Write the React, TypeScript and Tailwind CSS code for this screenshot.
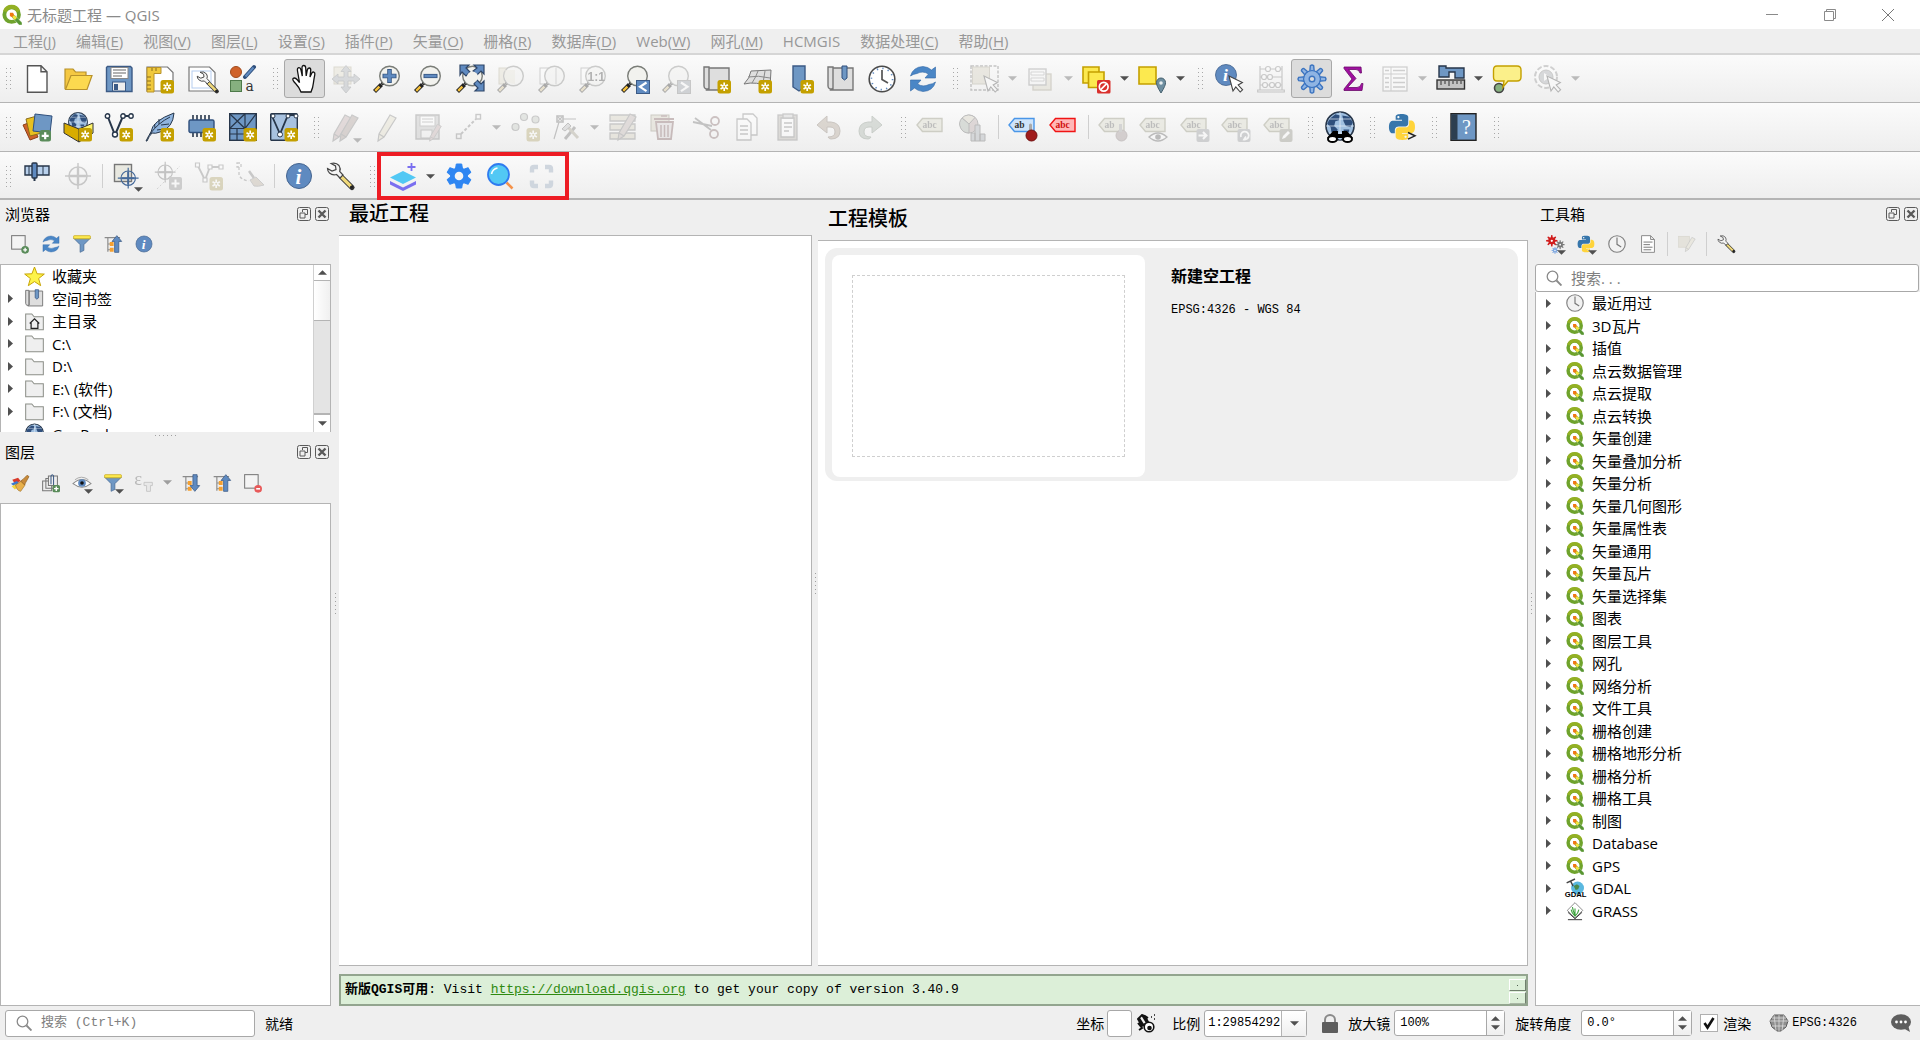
import React from 'react';

type Tool = {
  icon: string;
  label: string;
  off?: boolean;
  on?: boolean;
  menu?: boolean;
  mini?: boolean;
};

/* ---------- shared icon parts, all on a 28 x 28 grid ---------- */

const NewBadge = () => (
  <g>
    <rect x="14.5" y="15" width="13.5" height="13.5" rx="2.5" fill="#c4a000" />
    <path d="M21.2 17.5v8.5M17.5 19.7l7.4 4.2M24.9 19.7l-7.4 4.2" stroke="#fff" strokeWidth="1.7" />
    <circle cx="21.2" cy="21.8" r="1" fill="#c4a000" />
  </g>
);

const PlusBadge = () => (
  <g>
    <rect x="16.5" y="17" width="11.5" height="11.5" rx="2.5" fill="#5a8c5a" />
    <path d="M22.2 19.3v7M18.7 22.8h7" stroke="#fff" strokeWidth="2.2" />
  </g>
);

const Lens = ({ children }: { children?: React.ReactNode }) => (
  <g>
    <path d="M8.5 19.5l-7 7" stroke="#222" strokeWidth="4.2" />
    <path d="M6.4 21.6l-4.2 4.2" stroke="#f5c13c" strokeWidth="2.4" />
    <circle cx="10" cy="18" r="2" fill="#111" />
    <circle cx="16.5" cy="11" r="9.8" fill="#f2f2ee" stroke="#7a7d78" strokeWidth="1.4" />
    {children}
  </g>
);

const Cursor = () => (
  <path d="M13 11l4 15 2.8-4 4.4 5 2.4-2.2-4.4-4.8 4.2-2.4z" fill="#fff" stroke="#444" strokeWidth="1.1" />
);

const Tag = ({ fill, stroke, color, text = 'abc' }: { fill: string; stroke: string; color: string; text?: string }) => (
  <g>
    <path d="M0 12l5.500-6.500H25V18.500H5.500z" fill={fill} stroke={stroke} strokeWidth="1.4" />
    <text x="5.500" y="15" fontSize="9.500" fontFamily="Liberation Serif, serif" fontWeight="bold" fill={color}>{text}</text>
  </g>
);

const Globe = ({ cx, cy, r }: { cx: number; cy: number; r: number }) => (
  <g transform={`translate(${cx} ${cy}) scale(${r / 12})`}>
    <circle r="12" fill="#9fbfe0" stroke="#27364a" strokeWidth="1.4" />
    <path d="M-9-6l5-4 4 1-1 4-3 1-1 4 3 3-2 6-3-2-1-6-3-3zM2-9l6 1 3 5-2 4-4-1-2-4zM3 3l5 0-1 5-3 2z" fill="#2f4f7c" />
    <path d="M-12 0h24M-9.5-6h19M-9.5 6h19M0-12v24" stroke="#e6eef7" strokeWidth=".6" />
  </g>
);

const snake =
  'M14.25.18l.9.2.73.26.59.3.45.32.34.34.25.34.16.33.1.3.04.26.02.2-.01.13V8.5l-.05.63-.13.55-.21.46-.26.38-.3.31-.33.25-.35.19-.35.14-.33.1-.3.07-.26.04-.21.02H8.77l-.69.05-.59.14-.5.22-.41.27-.33.32-.27.35-.2.36-.15.37-.1.35-.07.32-.04.27-.02.21v3.06H3.17l-.21-.03-.28-.07-.32-.12-.35-.18-.36-.26-.36-.36-.35-.46-.32-.59-.28-.73-.21-.88-.14-1.05-.05-1.23.06-1.22.16-1.04.24-.87.32-.71.36-.57.4-.44.42-.33.42-.24.4-.16.36-.1.32-.05.24-.01h.16l.06.01h8.16v-.83H6.18l-.01-2.75-.02-.37.05-.34.11-.31.17-.28.25-.26.31-.23.38-.2.44-.18.51-.15.58-.12.64-.1.71-.06.77-.04.84-.02 1.27.05zm-6.3 1.98l-.23.33-.08.41.08.41.23.34.33.22.41.09.41-.09.33-.22.23-.34.08-.41-.08-.41-.23-.33-.33-.22-.41-.09-.41.09z';

const Python = () => (
  <g transform="translate(1 1) scale(1.08)">
    <path fill="#3776ab" d={snake} />
    <path fill="#ffd43b" transform="rotate(180 12 12)" d={snake} />
  </g>
);

const Cog = ({ cx, cy, r, fill, stroke = 'none', hole = '#fff' }: { cx: number; cy: number; r: number; fill: string; stroke?: string; hole?: string }) => (
  <g transform={`translate(${cx} ${cy}) scale(${r / 10})`} fill={fill} stroke={stroke}>
    {[0, 45, 90, 135, 180, 225, 270, 315].map((a) => (
      <path key={a} transform={`rotate(${a})`} d="M-1.6-5l.4-4.5q1.200-1 2.400 0L1.600-5z" />
    ))}
    <circle r="6" />
    <circle r="5.3" stroke="none" />
    <circle r="2" fill={hole} />
  </g>
);

const Crosshair = ({ color }: { color: string }) => (
  <g stroke={color} fill="none" strokeWidth="1.5">
    <circle cx="14" cy="14" r="9" />
    <path d="M14 1v26M1 14h26" />
    <path d="M14 6v16M6 14h16" strokeWidth="2.4" />
  </g>
);

const Info = ({ r = 12.5 }: { r?: number }) => (
  <g transform={`translate(14 14) scale(${r / 12.5})`}>
    <circle r="12.5" fill="#5f8ac0" stroke="#44648f" strokeWidth="1" />
    <text x="-3.5" y="7.5" fontSize="21" fontStyle="italic" fontWeight="bold" fontFamily="Liberation Serif, serif" fill="#fff">i</text>
  </g>
);

const Wrench = () => (
  <g>
    <path d="M15 14.500L26 25.500" stroke="#333" strokeWidth="5.2" strokeLinecap="round" />
    <path d="M15.500 15L25 24.500" stroke="#f0d97a" strokeWidth="3.2" />
    <circle cx="25.500" cy="25" r="1.500" fill="#222" />
    <path d="M5 1.500q5-1.500 8 2 2 3 .7 6l3.300 3.500-3 3-3.500-3.500q-4 1.200-7-1.500-2-2-2-4.500l4.500 2.500 4-1.500-.5-3.500z" fill="#f4f4f4" stroke="#444" strokeWidth="1.2" />
  </g>
);

const Refresh = () => (
  <g fill="#4a86c6" stroke="#2f66a6" strokeWidth=".6">
    <path d="M1.5 11Q4 2 14 1.500q5 .3 8.500 3.500L26.500 2v11H16l3.500-4Q14 5.500 8 8.500 4 9 1.500 11z" />
    <path d="M26.500 17Q24 26 14 26.500q-5-.3-8.500-3.500L1.500 26V15H12l-3.500 4q5.500 3.500 11.500.5 4-.5 6.500-2.500z" />
  </g>
);

const Clock = ({ ring = '#4a4a4a' }: { ring?: string }) => (
  <g>
    <circle cx="14" cy="14" r="12.8" fill="#fff" stroke={ring} strokeWidth="1.6" />
    <circle cx="14" cy="14" r="10.6" fill="none" stroke="#5f8ac0" strokeWidth="1.7" strokeDasharray="1.3 4.25" />
    <path d="M14 5v9.500l6 3.500" fill="none" stroke="#555" strokeWidth="1.7" />
  </g>
);

const PlainClock = () => (
  <g>
    <circle cx="14" cy="14" r="12.8" fill="#f2f2f2" stroke="#808080" strokeWidth="1.8" />
    <path d="M14 4v10.500l6.500 4" fill="none" stroke="#777" strokeWidth="1.8" />
  </g>
);

const Funnel = () => (
  <g>
    <path d="M1 5l10 10v12l6-3V15L27 5z" fill="#6e97c4" stroke="#44648f" />
    <rect x="1" y="1" width="26" height="5" rx="1" fill="#fce94f" stroke="#c4a000" />
  </g>
);

const TreeMove = ({ down }: { down?: boolean }) => (
  <g>
    <path d="M1 4h24M6 4v22M6 14h4M6 23h4" stroke="#8a8a8a" strokeWidth="1.8" fill="none" />
    <path d="M9 11h6v6H9zM9 20h6v6H9z" fill="#f5a030" />
    <path
      transform={down ? 'rotate(180 20 14)' : undefined}
      d="M20 1l7.500 9H23v17h-6.500V10h-4z"
      fill="#5f8ac0"
      stroke="#3b5a85"
      strokeWidth="1.2"
    />
  </g>
);

const Folder = ({ children }: { children?: React.ReactNode }) => (
  <g>
    <path d="M1 3h9l3.500 4H27v19H1z" fill="#efefef" stroke="#8c8f88" strokeWidth="1.5" />
    {children}
  </g>
);

const Pencil = ({ fill = '#e8dca0' }: { fill?: string }) => (
  <path d="M16 2l6 3-12 19-6 4 1-7zM5 21l5 3" fill={fill} stroke="#777" strokeWidth="1.2" />
);

const MapScroll = () => (
  <path d="M1 2h5v22H3q-2-.5-2-3zM6 3h20v22H4l2-2z" fill="#dedede" stroke="#777" strokeWidth="1.4" />
);

const art: Record<string, React.ReactNode> = {
  qgis: (
    <g>
      <circle cx="13.500" cy="13.500" r="10.200" fill="#fff" stroke="#6fa32c" strokeWidth="5.4" />
      <path d="M4 9A10.200 10.200 0 0 1 23 9" fill="none" stroke="#93b023" strokeWidth="5.4" />
      <path d="M14 17.500V14h3.500L28 24.500V28h-4z" fill="#589632" stroke="#fff" strokeWidth=".5" />
      <path d="M14.500 14.500h3l3.500 3.500-3 3-3.500-3.500z" fill="#f3e43c" />
      <path d="M11 11h4.500l1.500 3-3 3-3-1.500z" fill="#ee7913" />
    </g>
  ),
  newFile: <path d="M4.500.7h13.500l6 6v20.600H4.500zM18 .7v6h6" fill="#fff" stroke="#555" strokeWidth="1.4" />,
  open: (
    <g stroke="#b8922b" strokeWidth="1.2">
      <path d="M1 24V4h8l2.500 3H22v4" fill="#f5c842" />
      <path d="M1.500 24.500L7 10.500h21L23 24.500z" fill="#fcd94f" />
    </g>
  ),
  save: (
    <g>
      <path d="M2.500 1.500h23l1.500 1.500v23.500H1.500V2.500z" fill="#6e97c4" stroke="#3b5a85" strokeWidth="1.4" />
      <rect x="6" y="2.500" width="17" height="11" fill="#fff" stroke="#888" />
      <path d="M8 5h13M8 8h13M8 11h9" stroke="#999" strokeWidth="1.3" />
      <rect x="7.500" y="17" width="13" height="9" fill="#eee" stroke="#3b5a85" />
      <rect x="9" y="19" width="4" height="6" fill="#3b5a85" />
    </g>
  ),
  newLayout: (
    <g>
      <path d="M1 2h20.500L27 7.500V26H1z" fill="#fff" stroke="#777" strokeWidth="1.2" />
      <path d="M1 2.500h14v6H8V27H1z" fill="#f0c93c" stroke="#b8922b" />
      <path d="M1 12h4M1 16h4M1 20h4M1 24h4M6 3v3M10 3v3" stroke="#8a6d1c" />
      <NewBadge />
    </g>
  ),
  layouts: (
    <g>
      <path d="M1 2h20.500L27 7.500V26H1z" fill="#fff" stroke="#777" strokeWidth="1.2" />
      <rect x="4" y="6" width="19" height="17" fill="none" stroke="#b5cdf0" />
      <g transform="translate(8 6) scale(.8)"><Wrench /></g>
    </g>
  ),
  style: (
    <g>
      <circle cx="7" cy="7" r="5.500" fill="#d0622a" stroke="#a04a1c" />
      <path d="M16 12l9-10" stroke="#2f4f7c" strokeWidth="4" strokeLinecap="round" />
      <path d="M16.500 11.500l8-9" stroke="#5f8ac0" strokeWidth="2" />
      <rect x="1.500" y="15.500" width="11" height="11" fill="#86b07f" stroke="#4e7a4a" />
      <text x="16.500" y="26" fontSize="14" fontFamily="DejaVu Serif, serif" fill="#333">a</text>
    </g>
  ),
  pan: (
    <path
      d="M10 27q-2-5-5-8-4-4-3-5.500 2-1.500 4.500 1.500l2 2.500L6.500 6q-.5-3 1.300-3.300Q9.500 2.500 10 5l1.300 6L11 3q0-2.500 1.800-2.500T14.700 3l.5 8L16.300 5q.5-2.200 2-2 1.700.3 1.400 2.600L19 12l1.600-3.600q.8-1.800 2.200-1.300 1.500.6 1 2.500-.8 4-1.400 8.400-.4 4.500-2.400 9z"
      fill="#fff"
      stroke="#111"
      strokeWidth="1.3"
    />
  ),
  panSel: (
    <g>
      <rect x="2" y="2" width="17" height="17" fill="#e6dba8" stroke="#b8a76a" />
      <path d="M14 .5l5 6h-3v5.500h6V9l6 5-6 5v-3h-6v6h3l-5 6-5-6h3v-6H6v3L0 14l6-5v3h6V6.500H9z" fill="#9aa9b8" stroke="#6d7780" strokeWidth=".8" />
    </g>
  ),
  zoomIn: <Lens><path d="M16.500 4v14M9.500 11h14" stroke="#3b5a85" strokeWidth="4.6" /><path d="M16.500 5v12M10.500 11h12" stroke="#5f8ac0" strokeWidth="2.8" /></Lens>,
  zoomOut: <Lens><path d="M9.500 11h14" stroke="#3b5a85" strokeWidth="4.2" /><path d="M10.500 11h12" stroke="#5f8ac0" strokeWidth="2.4" /></Lens>,
  zoomFull: (
    <g>
      <Lens />
      <path d="M4 0h9l-3 3 4 4-4 4-4-4-2 3zM28 0v9l-3-3-4 4-4-4 4-3-3-3zM28 26h-9l3-3-4-4 3-4 4 4 3-3z" fill="#5f8ac0" stroke="#2f4668" strokeWidth="1.2" />
      <circle cx="16.500" cy="12" r="5.500" fill="#f2f2ee" />
    </g>
  ),
  zoomSel: <g><rect x="2" y="3" width="16" height="16" fill="#e6dba8" stroke="#b8a76a" /><Lens /><path d="M8 5h10v14q-9 0-11-8z" fill="#e6dba8" opacity=".6" /></g>,
  zoomLayer: <g><rect x="2" y="3" width="16" height="16" fill="#fff" stroke="#888" /><Lens><path d="M18 3v16" stroke="#999" /></Lens></g>,
  zoomNative: <g><rect x="2" y="3" width="16" height="16" fill="#fff" stroke="#888" /><Lens><text x="8.500" y="15.500" fontSize="12" fontWeight="bold" fontFamily="Liberation Sans, sans-serif" fill="#333">1:1</text></Lens></g>,
  zoomLast: <g><Lens /><rect x="15.500" y="15.500" width="13" height="13" fill="#5f8ac0" stroke="#3b5a85" /><path d="M25.500 17.500l-6.500 4.300 6.500 4.400" fill="none" stroke="#fff" strokeWidth="2.2" /></g>,
  zoomNext: <g><Lens /><rect x="15.500" y="15.500" width="13" height="13" fill="#8a99b0" stroke="#777" /><path d="M19 17.500l6.500 4.300-6.500 4.400" fill="none" stroke="#fff" strokeWidth="2.2" /></g>,
  newMap: <g><MapScroll /><NewBadge /></g>,
  new3d: <g><path d="M7 6l20-1-1 17Q12 16 0 19q6-6 7-13z" fill="#dedede" stroke="#777" /><path d="M4 12q10-2 22 1M14 6q-2 6-6 12M21 6l-2 12" fill="none" stroke="#888" /><NewBadge /></g>,
  newMark: <g><path d="M7 1h12v21l-6 4-6-4z" fill="#6e97c4" stroke="#3b5a85" strokeWidth="1.4" /><NewBadge /></g>,
  marks: <g><MapScroll /><path d="M15 1h5v12l-2.500 2-2.500-2z" fill="#6e97c4" stroke="#2f4f7c" /></g>,
  clock: <Clock />,
  plainClock: <PlainClock />,
  refresh: <Refresh />,
  select: <g><rect x="0" y="1" width="27" height="24" fill="none" stroke="#666" strokeWidth="1.4" strokeDasharray="3 1.5" /><rect x="1.500" y="2" width="17" height="17" fill="#d8cc9c" stroke="#a8996a" /><Cursor /></g>,
  selForm: <g><rect x="6" y="9" width="18" height="16" fill="#e0d4a4" stroke="#a8996a" strokeWidth="1.4" /><rect x="2" y="4" width="17" height="16" fill="#f6f6f6" stroke="#888" strokeWidth="1.4" /><path d="M4 7h13v3H4zM4 13h13v3H4z" fill="#fff" stroke="#888" strokeWidth=".8" /></g>,
  deselect: (
    <g>
      <path d="M0 2h16v16H0z" fill="#fce94f" stroke="#c4a000" strokeWidth="1.6" />
      <path d="M5.500 7h15.500v15.500H5.500z" fill="#fce94f" stroke="#c4a000" strokeWidth="1.6" />
      <rect x="14" y="15" width="13.500" height="13.500" rx="1.500" fill="#d9302c" />
      <circle cx="20.700" cy="21.700" r="4.400" fill="none" stroke="#fff" strokeWidth="1.7" />
      <path d="M17.700 24.700l6-6" stroke="#fff" strokeWidth="1.7" />
    </g>
  ),
  selLoc: <g><path d="M0 2h17v17H0z" fill="#fce94f" stroke="#c4a000" strokeWidth="1.6" /><path d="M22 28q-5-8-4.500-10.500A4.500 4.500 0 0 1 26.500 17.500Q27 20 22 28z" fill="#6d8ea0" stroke="#45606e" /><circle cx="22" cy="18" r="1.800" fill="#e8eef0" /></g>,
  identify: <g><g transform="translate(-4 -4)"><Info r={10.5} /></g><Cursor /></g>,
  abacus: (
    <g fill="none" stroke="#777" strokeWidth="1.2">
      <path d="M3 1v24M25 1v24M.7 25h26.600v2H.7zM3 4h22M3 12h22M3 20h22" />
      <g fill="#fff">
        <circle cx="11" cy="4" r="2.500" /><circle cx="21" cy="4" r="2.500" />
        <circle cx="7" cy="12" r="2.500" /><circle cx="13" cy="12" r="2.500" />
        <circle cx="8" cy="20" r="2.500" /><circle cx="15" cy="20" r="2.500" /><circle cx="21" cy="20" r="2.500" />
      </g>
    </g>
  ),
  gear: <Cog cx={14} cy={14} r={14} fill="#8fb4e3" stroke="#3c74c0" hole="#dcdcdc" />,
  sigma: <path d="M5 2h17l.5 6h-1.500q-1-3.500-4-3.500h-7.500L17 13.500 8.500 22.500H18q3.500 0 4.500-4h1.500l-1 7H5v-1.500L13 14 5 3.500z" fill="#a010a0" stroke="#6a0a6a" strokeWidth=".8" />,
  table: <g stroke="#888" fill="none"><rect x="2" y="2" width="24" height="24" fill="#fff" strokeWidth="1.3" /><path d="M2 9h24M10 2v24" /><path d="M4 5.500h4M12 5.500h12M4 13h4M12 13h12M4 17.500h4M12 17.500h12M4 22h4M12 22h12" strokeWidth="1.6" /></g>,
  measure: (
    <g>
      <path d="M2 1h7v2h18v10h-9V7h-6v5H2z" fill="#6e97c4" stroke="#27364a" strokeWidth="1.4" />
      <rect x="0" y="15" width="27.500" height="9" fill="#c4c4c4" stroke="#333" strokeWidth="1.4" />
      <path d="M4 16v4M8 16v3M12 16v5M16 16v3M20 16v3M24 16v3" stroke="#333" />
    </g>
  ),
  tip: <g><circle cx="6" cy="23" r="4.500" fill="#86b07f" stroke="#444" strokeWidth="1.6" /><path d="M4 1h20q4 0 4 4v7q0 4-4 4h-9l-5 6 1-6H4q-3.500 0-3.500-4V5q0-4 3.500-4z" fill="#fbf08a" stroke="#c4a000" strokeWidth="1.4" /></g>,
  action: <g><circle cx="12" cy="12" r="11" fill="#fff" stroke="#888" strokeWidth="2" strokeDasharray="5 2" /><circle cx="12" cy="12" r="7" fill="#9aa4b0" stroke="#777" /><path d="M10 8l6 4-6 4z" fill="#fff" /><Cursor /></g>,

  dataSrc: (
    <g>
      <path d="M0 12l8-3 7 15-8 3z" fill="#d0622a" stroke="#8a3f18" />
      <path d="M3 6l11-3 5 17-12 3z" fill="#e8c020" stroke="#8a6d1c" />
      <path d="M12 1l17 2-2 17-17-2z" fill="#6e97c4" stroke="#2f4f7c" />
      <PlusBadge />
    </g>
  ),
  geopkg: (
    <g>
      <Globe cx={14} cy={9} r={9.5} />
      <path d="M0 10l15 6v13L0 20z" fill="#d8ac00" stroke="#333" />
      <path d="M29 10l-14 6v13l14-9z" fill="#fdf36a" stroke="#333" />
      <NewBadge />
    </g>
  ),
  shp: (
    <g>
      <path d="M2.500 3l7.500 19L18 3h9" fill="none" stroke="#27364a" strokeWidth="2" />
      <g fill="#fff" stroke="#27364a" strokeWidth="1.4"><circle cx="2.500" cy="3" r="2.200" /><circle cx="10" cy="21.500" r="2.500" /><circle cx="18" cy="3" r="2.200" /><circle cx="26" cy="3" r="2.200" /></g>
      <NewBadge />
    </g>
  ),
  feather: <g><path d="M0 28Q3 22 5 19 6 8 28 0q-1 15-14 19-5 2-8 1Q3 23 1 28z" fill="#8fb4de" stroke="#27364a" /><path d="M4 21Q12 10 24 4M9 15l-.5-4M13 11V6M11 17l7-1M15 12l8-1" stroke="#27364a" fill="none" /><NewBadge /></g>,
  memory: <g><path d="M5 2v6M9 2v6M13 2v6M17 2v6M21 2v6M5 19v5M9 19v5M13 19v5" stroke="#27364a" strokeWidth="1.6" /><rect x="1" y="7" width="25" height="12.500" rx="1.500" fill="#6e97c4" stroke="#2f4f7c" strokeWidth="1.4" /><NewBadge /></g>,
  mesh: (
    <g>
      <rect x=".7" y=".7" width="26.600" height="26.600" fill="#6e97c4" stroke="#27364a" strokeWidth="1.4" />
      <path d="M.7 15.500h26.600M16 .7V27M.7 .7L16 15.500 27.300 .7M16 .7L.7 15.500M.7 21H16M8 15.500V27" stroke="#27364a" strokeWidth="1.2" fill="none" />
      <NewBadge />
    </g>
  ),
  gpx: (
    <g>
      <rect x=".7" y=".7" width="26.600" height="26.600" rx="1" fill="#a8c2e0" stroke="#27364a" strokeWidth="1.4" />
      <path d="M2 3l8 18L18 2h8" fill="none" stroke="#27364a" strokeWidth="1.8" />
      <g fill="#fff" stroke="#27364a"><circle cx="3" cy="3" r="2" /><circle cx="10" cy="21.500" r="2.500" /><circle cx="18" cy="3" r="2" /><circle cx="26" cy="3" r="2" /></g>
      <NewBadge />
    </g>
  ),

  edits: <g><g transform="translate(-3 0)"><Pencil fill="#d8a0a0" /></g><g transform="translate(4 0)"><Pencil fill="#b89080" /></g></g>,
  edit: <g transform="translate(1 0)"><Pencil /></g>,
  saveEdits: <g><path d="M2 2h23v24H2z" fill="#bcbcbc" stroke="#777" strokeWidth="1.4" /><rect x="6" y="3" width="15" height="10" fill="#fff" stroke="#888" /><path d="M8 6h11M8 9h11" stroke="#888" /><rect x="7" y="17" width="11" height="8" fill="#eee" stroke="#777" /><g transform="translate(13 10) scale(.65)"><Pencil fill="#d8a0a0" /></g></g>,
  line: <g stroke="#777" fill="none" strokeWidth="1.4"><rect x="1.500" y="21" width="4.500" height="4.500" /><rect x="21" y="1.500" width="4.500" height="4.500" /><path d="M6 21L21 6" strokeWidth="2" strokeDasharray="3 2" /></g>,
  points: <g><g fill="#b8c8b4" stroke="#777" strokeWidth="1.2"><circle cx="12" cy="4" r="3.500" /><circle cx="23.500" cy="6.500" r="3.500" /><circle cx="3.500" cy="14" r="3.500" /></g><NewBadge /></g>,
  vertex: <g fill="none" stroke="#666" strokeWidth="1.6"><rect x="4" y="3" width="6" height="6" /><path d="M4 3l6 6M10 3l-6 6M10 6h13M6 9L1 26" strokeWidth="1.2" /><path d="M12 26l10-12" strokeWidth="3" /><path d="M13 12l12 13" strokeWidth="3" stroke="#a89868" /><path d="M9 16l6-6 3 3-6 5z" fill="#bbb" strokeWidth="1" /></g>,
  modAttr: <g><path d="M1 2h25v6H1zM1 11h25v6H1zM1 20h25v6H1z" fill="#d8cc9c" stroke="#777" strokeWidth="1.3" /><g transform="translate(5 -1)"><Pencil fill="#c8a8a0" /></g></g>,
  trash: <g><rect x="1" y="2" width="18" height="16" fill="#d8cc9c" stroke="#8a7a4a" /><path d="M4 6h20M6 9h17l-2 17H8z" fill="#dcc" stroke="#a04848" strokeWidth="1.8" /><path d="M11 12v12M14.500 12v12M18 12v12M11 3h6" stroke="#a04848" strokeWidth="1.5" /></g>,
  cut: <g fill="none" stroke="#666" strokeWidth="1.8"><path d="M1 9l19 4M3 5l16 12" /><circle cx="23" cy="8" r="4" stroke="#a05858" /><circle cx="22" cy="21" r="4" stroke="#a05858" /></g>,
  copy: <g fill="#fff" stroke="#777" strokeWidth="1.3"><path d="M10 1h10l4 4v17H10z" /><path d="M4 6h10l4 4v17H4z" /><path d="M7 13h8M7 17h8M7 21h8" /></g>,
  paste: <g fill="#fff" stroke="#777" strokeWidth="1.3"><rect x="4" y="2" width="19" height="25" fill="#b8ac98" /><path d="M7 5h13v19H7z" /><path d="M10 10h8M10 14h8M10 18h5" /><rect x="9" y="1" width="10" height="4" fill="#ccc" /></g>,
  undo: <path d="M12 3v6h4q9 1 9 9t-9 8q-2 0-3-2 7 0 7-5t-5-5h-3v6L2 12z" fill="#c09870" stroke="#8a6a4a" />,
  redo: <path d="M15 3v6h-4q-9 1-9 9t9 8q2 0 3-2-7 0-7-5t5-5h3v6l10-8z" fill="#98b098" stroke="#6a8a6a" />,
  labels: <g transform="translate(-2 0)"><Tag fill="#d8d8a8" stroke="#8a8a4a" color="#555" /></g>,
  diagram: <g stroke="#555" transform="translate(-1 1)"><circle cx="10" cy="10" r="9" fill="#c89898" /><path d="M10 10L3 4A9 9 0 0 1 16 3.500z" fill="#d8cc9c" /><path d="M10 10L3 4A9 9 0 0 0 10 19z" fill="#98b098" /><path d="M12 19h4v8h-4zM16 11h5v16h-5zM21 20h5v7h-5z" fill="#98a8b8" /></g>,
  pinBlue: <g><Tag fill="#cfe4fb" stroke="#4a96e8" color="#333" text="ab" /><path d="M21.500 12v8" stroke="#aaa" strokeWidth="3" strokeLinecap="round" /><circle cx="22.500" cy="22.500" r="5.500" fill="#a01c1c" stroke="#701010" /></g>,
  tagRed: <Tag fill="#ffb8b8" stroke="#f01414" color="#d01010" />,
  pinOff: <g><Tag fill="#d8d8a8" stroke="#8a8a4a" color="#555" text="ab" /><circle cx="22.500" cy="22.500" r="5.500" fill="#a88" stroke="#866" /><path d="M21.500 11v8" stroke="#999" strokeWidth="3" /></g>,
  tagEye: <g><Tag fill="#d8d8a8" stroke="#8a8a4a" color="#555" /><path d="M9 24q9-8 18 0-9 8-18 0z" fill="#fff" stroke="#555" strokeWidth="1.3" /><circle cx="18" cy="24" r="2.800" fill="#555" /></g>,
  tagMove: <g><Tag fill="#d8d8a8" stroke="#8a8a4a" color="#555" /><rect x="15.500" y="16" width="13" height="13" rx="2" fill="#8a929a" /><path d="M17.500 22.500h8M22 19l3.500 3.500L22 26" stroke="#fff" strokeWidth="2" fill="none" /></g>,
  tagTurn: <g><Tag fill="#d8d8a8" stroke="#8a8a4a" color="#555" /><rect x="15.500" y="16" width="13" height="13" rx="2" fill="#8a929a" /><path d="M19 24a4 4 0 1 1 3 2.500l2-3" stroke="#fff" strokeWidth="1.8" fill="none" /></g>,
  tagEdit: <g><Tag fill="#d8d8a8" stroke="#8a8a4a" color="#555" /><rect x="15.500" y="16" width="13" height="13" rx="2" fill="#8a8a6a" /><path d="M18 26l1-3 5-5 2 2-5 5z" fill="#fff" /></g>,
  metasearch: (
    <g>
      <Globe cx={14} cy={13} r={14} />
      <path d="M7 18h5v3h4v-3h5l6 7H1z" fill="#000" />
      <ellipse cx="6.500" cy="26" rx="4.500" ry="3" fill="#fff" stroke="#000" strokeWidth="2" />
      <ellipse cx="21.500" cy="26" rx="4.500" ry="3" fill="#fff" stroke="#000" strokeWidth="2" />
    </g>
  ),
  python: <g><Python /><path d="M20 19.500l7 3.300-7 3.400" fill="none" stroke="#222" strokeWidth="1.5" /></g>,
  scripts: <Python />,
  help: <g><rect x="1" y=".7" width="25" height="26.600" fill="#6e97c4" stroke="#222" strokeWidth="1.4" /><rect x="1.500" y="1.200" width="6" height="25.600" fill="#2c3e50" /><text x="12" y="21" fontSize="20" fontFamily="Liberation Serif, serif" fill="#fff">?</text></g>,

  gps: <g><path d="M2 4h24v9H2z" fill="#b8d0ec" stroke="#27364a" strokeWidth="1.4" /><path d="M6 4v9M20 4v9" stroke="#27364a" /><rect x="9" y="1" width="5" height="15" rx="1" fill="#5f8ac0" stroke="#27364a" strokeWidth="1.4" /><path d="M11.500 16v3" stroke="#27364a" strokeWidth="2" /></g>,
  cross: <Crosshair color="#777" />,
  crossBox: <g><rect x="1.500" y="2.500" width="17" height="17" fill="#e8e8e0" stroke="#777" strokeWidth="1.4" /><g transform="translate(4 5) scale(.8)"><Crosshair color="#44699a" /></g></g>,
  crossAdd: <g><g transform="translate(0 -1) scale(.8)"><Crosshair color="#666" /></g><path d="M3 27L26 4" stroke="#999" strokeDasharray="2 2" /><rect x="15" y="15" width="13" height="13" rx="2" fill="#888" /><path d="M21.500 17.500v8M17.500 21.500h8" stroke="#fff" strokeWidth="2" /></g>,
  shpOff: <g><path d="M2.500 3l7.500 15L15 5h11" fill="none" stroke="#777" strokeWidth="1.8" /><g fill="#fff" stroke="#777" strokeWidth="1.2"><path d="M.5 1h4v4h-4zM8 16h4v4H8zM13 3h4v4h-4zM24 3h4v4h-4z" /></g><NewBadge /></g>,
  broom: <g><path d="M1 1h4v4H1zM3 5v8q2 5 10 6" fill="none" stroke="#777" strokeWidth="1.3" strokeDasharray="3 2" /><path d="M13 9l5 7" stroke="#777" strokeWidth="2.5" /><path d="M14 18l6-3 8 8q-6 2-10 1z" fill="#c8a878" stroke="#888" /></g>,
  info: <Info />,
  wrench: <Wrench />,
  hcLayers: <g><path d="M1 19l13 6.500L27 19v3.500L14 29 1 22.500z" fill="#7a6ff0" /><path d="M14 9l13 6.500L14 22 1 15.500z" fill="#52c8f4" /><path d="M22.500 1v8M18.500 5h8" stroke="#7a6ff0" strokeWidth="1.8" /></g>,
  hcGear: (
    <g fill="#2f86f2">
      {[0, 60, 120, 180, 240, 300].map((a) => <path key={a} transform={`rotate(${a} 14 14)`} d="M10.500 7l.8-5h5.400l.8 5z" stroke="#2f86f2" strokeLinejoin="round" />)}
      <circle cx="14" cy="14" r="9" /><circle cx="14" cy="14" r="4.300" fill="#f5f5f5" />
    </g>
  ),
  hcLens: <g><path d="M20.500 20.500l6 6" stroke="#f5924a" strokeWidth="2.6" /><circle cx="12.500" cy="12.500" r="10.500" fill="#52c8f4" stroke="#2f7bf0" strokeWidth="1.8" /><path d="M5.500 12q1-5 6-6" fill="none" stroke="#fff" strokeWidth="1.6" /></g>,
  hcFrame: <path d="M5 10.500V7q0-2 2-2h4M18 5h4q2 0 2 2v3.500M24 18.500V22q0 2-2 2h-4M11 24H7q-2 0-2-2v-3.500" fill="none" stroke="#cfd6de" strokeWidth="4.4" />,

  addLayer: <g><rect x="1" y="1" width="21" height="21" fill="#f4f4f4" stroke="#777" strokeWidth="1.6" /><circle cx="22" cy="23" r="6" fill="#5a8c5a" /><path d="M22 20v6M19 23h6" stroke="#fff" strokeWidth="2" /></g>,
  removeLayer: <g><rect x="1" y="1" width="21" height="21" fill="#f4f4f4" stroke="#777" strokeWidth="1.6" /><circle cx="22" cy="23" r="6" fill="#e85a5a" /><path d="M19 23h6" stroke="#fff" strokeWidth="2.5" /></g>,
  filter: <Funnel />,
  collapse: <TreeMove />,
  expand: <TreeMove down />,
  brush: (
    <g>
      <path d="M2 9l9-3 4 5-9 4z" fill="#d83a2a" />
      <path d="M0 15l9-4 5 4-8 5z" fill="#3a78d0" />
      <path d="M1 19l6-3 5 3-6 5z" fill="#f3d43c" />
      <path d="M7 17l9-6 6 6-7 10q-6-1-8-10z" fill="#e8b04a" stroke="#a0702a" />
      <path d="M15 11l6 6 2-4 5-9-3-2-6 6z" fill="#c88a3a" stroke="#8a5a1a" />
    </g>
  ),
  addGroup: <g><path d="M1 11h14v15H1zM6 7h14v15H6z" fill="#eee" stroke="#777" strokeWidth="1.6" /><path d="M10 3h14v15H10z" fill="#eee" stroke="#777" strokeWidth="1.6" /><path d="M14 16V3q2-4 4 0v14" fill="none" stroke="#3b5a85" strokeWidth="1.6" /><PlusBadge /></g>,
  eye: <g><path d="M0 15q14-13 28 0-14 11-28 0z" fill="#fff" stroke="#8a8a8a" strokeWidth="1.6" /><path d="M3 9Q13 1 24 9" fill="none" stroke="#aaa" strokeWidth="1.5" /><circle cx="14" cy="14" r="6" fill="#5f8ac0" /><circle cx="14" cy="14" r="2.800" fill="#111" /></g>,
  expr: <g><text x="-1" y="17" fontSize="29" fontFamily="Liberation Serif, serif" fill="#555">ε</text><path d="M14 13h13v5h-3v9h-6v-9h-4z" fill="#ddd" stroke="#777" strokeWidth="1.4" /></g>,
  star: <path d="M14 0l3.800 10 10.700.4-8.400 6.600 3 10.500L14 21.500 4.900 27.500l3-10.500L-.5 10.400l10.700-.4z" fill="#fdf34a" stroke="#c4a000" strokeWidth="1.4" />,
  home: <Folder><path d="M7 17l7-7 7 7M9 16v8h10v-8" fill="none" stroke="#222" strokeWidth="1.8" /></Folder>,
  folder: <Folder />,
  globe: <Globe cx={14} cy={13} r={13} />,
  gears: <g><Cog cx={9} cy={9} r={9} fill="#d01c1c" /><Cog cx={22} cy={15} r={7} fill="#777" /><Cog cx={14} cy={24} r={5.5} fill="#7fa8e0" /></g>,
  doc: <g><path d="M4 1h14l6 6v20H4zM18 1v6h6" fill="#fff" stroke="#888" strokeWidth="1.5" /><path d="M7 11h14M7 15h10M7 19h14M7 23h12" stroke="#777" strokeWidth="1.5" /></g>,
  inplace: <g><rect x="1" y="2" width="17" height="17" fill="#d8cc9c" stroke="#b8a76a" /><g transform="translate(8 2) scale(.85)"><Pencil /></g></g>,
  gdal: (
    <g>
      <circle cx="18" cy="14" r="10" fill="#5ab8e0" />
      <path d="M12 11l5-3 4 3-2 5-4 1z" fill="#4a8a4a" />
      <path d="M1 6l13-6M7 3l4 8" stroke="#444" strokeWidth="2.2" />
      <text x="-2" y="28" fontSize="12" fontWeight="bold" fontFamily="Liberation Sans, sans-serif" fill="#000">GDAL</text>
    </g>
  ),
  grass: <g><path d="M14 1l12 12-12 12L2 13z" fill="#fff" stroke="#777" strokeWidth="1.3" /><path d="M3 16l11 10 11-10M3 27.500h22" fill="none" stroke="#333" strokeWidth="1.5" /><path d="M14 23V10M14 22Q9 18 8 12M14 22q5-4 6-10M14 21Q11 14 10 8" fill="none" stroke="#3aa03a" strokeWidth="1.7" /></g>,
};

const Icon = ({ name, className = 'size-7' }: { name: string; className?: string }) => (
  <svg viewBox="0 0 28 28" className={`${className} shrink-0 overflow-visible`} aria-hidden="true">{art[name]}</svg>
);

const Caret = ({ className = '' }: { className?: string }) => (
  <svg viewBox="0 0 10 5" className={`h-[5px] w-[9px] shrink-0 ${className}`} aria-hidden="true">
    <path d="M0 0h10L5 5z" fill="#505050" />
  </svg>
);

/* ---------- toolbars ---------- */

const Handle = ({ first }: { first?: boolean }) => (
  <div className={first ? 'flex w-4 shrink-0 items-center pl-[6px]' : 'flex w-[21px] shrink-0 items-center pl-[10px]'}>
    <svg className="h-[21px] w-[5px]" aria-hidden="true">
      <path d="M.5 0v21M4.5 0v21" stroke="#a8a8a8" strokeDasharray="1 3" />
    </svg>
  </div>
);

const Separator = () => (
  <div className="flex w-2 shrink-0 items-center justify-center">
    <div className="h-6 w-px bg-[#cfcfcf]" />
  </div>
);

const ToolButton = ({ tool }: { tool: Tool }) => (
  <div className={`flex items-center ${tool.off ? 'opacity-35 grayscale-[60%]' : ''}`}>
    <button
      type="button"
      aria-label={tool.label}
      title={tool.label}
      className={`relative flex h-[39px] w-[41px] items-center justify-center ${
        tool.on ? 'rounded-[3px] border border-[#a8a8a8] bg-[#dcdcdc]' : ''
      }`}
    >
      <Icon name={tool.icon} />
      {tool.mini && <Caret className="absolute right-1 bottom-1" />}
    </button>
    {tool.menu && (
      <button type="button" aria-label={`${tool.label}菜单`} className="flex h-[39px] w-[15px] items-center justify-center">
        <Caret />
      </button>
    )}
  </div>
);

// every fourth button takes one more pixel, a 41.25px pitch on average
const Group = ({ tools }: { tools: Tool[] }) => (
  <div className="flex shrink-0 items-center [&>*:nth-child(4n):not(:last-child)]:mr-px">
    {tools.map((tool) => <ToolButton key={tool.icon} tool={tool} />)}
  </div>
);

const fileTools: Tool[] = [
  { icon: 'newFile', label: '新建工程' },
  { icon: 'open', label: '打开工程' },
  { icon: 'save', label: '保存工程' },
  { icon: 'newLayout', label: '新建打印布局' },
  { icon: 'layouts', label: '布局管理器' },
  { icon: 'style', label: '样式管理器' },
];

const navTools: Tool[] = [
  { icon: 'pan', label: '平移地图', on: true },
  { icon: 'panSel', label: '平移到所选', off: true },
  { icon: 'zoomIn', label: '放大' },
  { icon: 'zoomOut', label: '缩小' },
  { icon: 'zoomFull', label: '全图显示' },
  { icon: 'zoomSel', label: '缩放到所选', off: true },
  { icon: 'zoomLayer', label: '缩放到图层', off: true },
  { icon: 'zoomNative', label: '原始分辨率', off: true },
  { icon: 'zoomLast', label: '上一视图' },
  { icon: 'zoomNext', label: '下一视图', off: true },
  { icon: 'newMap', label: '新建地图视图' },
  { icon: 'new3d', label: '新建3D地图视图' },
  { icon: 'newMark', label: '新建空间书签' },
  { icon: 'marks', label: '显示空间书签' },
  { icon: 'clock', label: '时态控制器' },
  { icon: 'refresh', label: '刷新' },
];

const selectTools: Tool[] = [
  { icon: 'select', label: '选择要素', off: true, menu: true },
  { icon: 'selForm', label: '按值选择', off: true, menu: true },
  { icon: 'deselect', label: '取消选择', menu: true },
  { icon: 'selLoc', label: '按位置选择', menu: true },
];

const attrTools: Tool[] = [
  { icon: 'identify', label: '识别要素' },
  { icon: 'abacus', label: '字段计算器', off: true },
  { icon: 'gear', label: '工具箱', on: true },
  { icon: 'sigma', label: '统计面板' },
  { icon: 'table', label: '属性表', off: true, menu: true },
  { icon: 'measure', label: '测量', menu: true },
  { icon: 'tip', label: '地图提示' },
  { icon: 'action', label: '要素动作', off: true, menu: true },
];

const sourceTools: Tool[] = [
  { icon: 'dataSrc', label: '数据源管理器' },
  { icon: 'geopkg', label: '新建GeoPackage图层' },
  { icon: 'shp', label: '新建Shapefile图层' },
  { icon: 'feather', label: '新建SpatiaLite图层' },
  { icon: 'memory', label: '新建临时图层' },
  { icon: 'mesh', label: '新建网孔图层' },
  { icon: 'gpx', label: '新建GPX图层' },
];

const editTools: Tool[] = [
  { icon: 'edits', label: '当前编辑', off: true, mini: true },
  { icon: 'edit', label: '切换编辑', off: true },
  { icon: 'saveEdits', label: '保存编辑', off: true },
  { icon: 'line', label: '数字化', off: true, menu: true },
  { icon: 'points', label: '添加要素', off: true },
  { icon: 'vertex', label: '顶点工具', off: true, menu: true },
  { icon: 'modAttr', label: '修改属性', off: true },
  { icon: 'trash', label: '删除所选', off: true },
  { icon: 'cut', label: '剪切', off: true },
  { icon: 'copy', label: '复制', off: true },
  { icon: 'paste', label: '粘贴', off: true },
  { icon: 'undo', label: '撤销', off: true },
  { icon: 'redo', label: '重做', off: true },
];

const labelTools: Tool[] = [
  { icon: 'labels', label: '标注选项', off: true },
  { icon: 'diagram', label: '图表选项', off: true },
];

const pinTools: Tool[] = [
  { icon: 'pinBlue', label: '高亮固定标注' },
  { icon: 'tagRed', label: '显示未放置标注' },
];

const moveTools: Tool[] = [
  { icon: 'pinOff', label: '固定标注', off: true },
  { icon: 'tagEye', label: '显示标注', off: true },
  { icon: 'tagMove', label: '移动标注', off: true },
  { icon: 'tagTurn', label: '旋转标注', off: true },
  { icon: 'tagEdit', label: '更改标注', off: true },
];

const gpsTools: Tool[] = [
  { icon: 'gps', label: '连接GPS' },
  { icon: 'cross', label: '居中', off: true },
];

const trackTools: Tool[] = [
  { icon: 'crossBox', label: '居中设置', mini: true },
  { icon: 'crossAdd', label: '添加航迹点', off: true },
  { icon: 'shpOff', label: '从航迹创建要素', off: true },
  { icon: 'broom', label: '重置航迹', off: true },
];

const infoTools: Tool[] = [
  { icon: 'info', label: 'GPS信息' },
  { icon: 'wrench', label: 'GPS设置' },
];

const pluginTools: Tool[] = [
  { icon: 'hcLayers', label: '添加底图', menu: true },
  { icon: 'hcGear', label: '设置' },
  { icon: 'hcLens', label: '查找' },
  { icon: 'hcFrame', label: '范围' },
];

const menus: [string, string?][] = [
  ['工程', 'J'], ['编辑', 'E'], ['视图', 'V'], ['图层', 'L'], ['设置', 'S'], ['插件', 'P'], ['矢量', 'O'],
  ['栅格', 'R'], ['数据库', 'D'], ['Web', 'W'], ['网孔', 'M'], ['HCMGIS'], ['数据处理', 'C'], ['帮助', 'H'],
];

/* ---------- docks ---------- */

const DockTitle = ({ children }: { children: React.ReactNode }) => (
  <div className="flex h-[27px] items-center pr-[2px] pl-[5px]">
    <h2 className="flex-1 text-[15px] leading-5">{children}</h2>
    <div className="flex gap-1">
      <button type="button" aria-label="浮动" className="size-[14px]">
        <svg viewBox="0 0 14 14" fill="none" stroke="#5a5a5a">
          <rect x=".5" y=".5" width="13" height="13" rx="2" />
          <path d="M5.500 5V2.500h5v5H8M3 6h5v5H3z" />
        </svg>
      </button>
      <button type="button" aria-label="关闭" className="size-[14px]">
        <svg viewBox="0 0 14 14" fill="none" stroke="#5a5a5a">
          <rect x=".5" y=".5" width="13" height="13" rx="2" />
          <path d="M3.500 3.500l7 7M10.500 3.500l-7 7" strokeWidth="2.4" />
        </svg>
      </button>
    </div>
  </div>
);

const DockButton = ({ icon, label, mini, off }: Tool) => (
  <button
    type="button"
    aria-label={label}
    className={`relative flex h-6 w-[31px] items-center justify-center ${off ? 'opacity-35 grayscale-[60%]' : ''}`}
  >
    <Icon name={icon} className="size-[18px]" />
    {mini && <Caret className="absolute right-1 bottom-px w-[7px]" />}
  </button>
);

const Expander = ({ hidden }: { hidden?: boolean }) => (
  <svg viewBox="0 0 5 9" className={`h-[9px] w-[5px] shrink-0 ${hidden ? 'invisible' : ''}`} aria-hidden="true">
    <path d="M0 0l5 4.500L0 9z" fill="#505050" />
  </svg>
);

const browserItems = [
  { icon: 'star', text: '收藏夹', leaf: true },
  { icon: 'marks', text: '空间书签' },
  { icon: 'home', text: '主目录' },
  { icon: 'folder', text: 'C:\\' },
  { icon: 'folder', text: 'D:\\' },
  { icon: 'folder', text: 'E:\\ (软件)' },
  { icon: 'folder', text: 'F:\\ (文档)' },
  { icon: 'globe', text: 'GeoPackage', leaf: true },
];

const toolboxItems = [
  '最近用过', '3D瓦片', '插值', '点云数据管理', '点云提取', '点云转换', '矢量创建', '矢量叠加分析', '矢量分析',
  '矢量几何图形', '矢量属性表', '矢量通用', '矢量瓦片', '矢量选择集', '图表', '图层工具', '网孔', '网络分析',
  '文件工具', '栅格创建', '栅格地形分析', '栅格分析', '栅格工具', '制图', 'Database', 'GPS', 'GDAL', 'GRASS',
];

const toolboxIcon = (text: string) => {
  if (text === '最近用过') return 'plainClock';
  if (text === 'GDAL') return 'gdal';
  if (text === 'GRASS') return 'grass';
  return 'qgis';
};

const SplitDots = ({ vertical }: { vertical?: boolean }) => (
  <svg className={vertical ? 'h-[21px] w-px' : 'h-px w-[21px]'} aria-hidden="true">
    <path d={vertical ? 'M.5 0v21' : 'M0 .5h21'} stroke="#a0a0a0" strokeDasharray="1 3" />
  </svg>
);

const SearchGlass = () => (
  <svg viewBox="0 0 16 16" className="size-4 shrink-0" fill="none" stroke="#8a8a8a" aria-hidden="true">
    <circle cx="6.5" cy="6.5" r="5.3" strokeWidth="1.3" />
    <path d="M10.500 10.500l5 5" strokeWidth="1.9" />
  </svg>
);

const BrowserDock = () => (
  <section className="shrink-0">
    <DockTitle>浏览器</DockTitle>
    <div className="flex h-[37px] items-center pb-[3px] pl-1">
      <DockButton icon="addLayer" label="添加所选图层" />
      <DockButton icon="refresh" label="刷新" />
      <DockButton icon="filter" label="过滤" />
      <DockButton icon="collapse" label="全部折叠" />
      <DockButton icon="info" label="属性" />
    </div>
    <div className="flex h-[168px] overflow-hidden border-x border-t border-[#b4b4b4] bg-white">
      <ul className="flex-1">
        {browserItems.map((item) => (
          <li key={item.text} className="flex h-[22px] items-center pl-[7px] text-[15px] leading-5 even:h-[23px]">
            <Expander hidden={item.leaf} />
            <Icon name={item.icon} className="ml-3 size-[19px]" />
            <span className="ml-2">{item.text}</span>
          </li>
        ))}
      </ul>
      <div className="flex w-[17px] flex-col border-l border-[#d0d0d0]">
        <button type="button" aria-label="向上滚动" className="flex h-4 items-center justify-center border-b border-[#b4b4b4]">
          <Caret className="rotate-180" />
        </button>
        <div className="h-10 border-b border-[#b4b4b4] bg-linear-to-r from-white to-[#f0f0f0]" />
        <div className="flex-1 border-b-2 border-[#b4b4b4] bg-[#e4e4e4]" />
        <button type="button" aria-label="向下滚动" className="flex h-[17px] items-center justify-center">
          <Caret />
        </button>
      </div>
    </div>
  </section>
);

const LayersDock = () => (
  <section className="flex flex-1 flex-col">
    <DockTitle>图层</DockTitle>
    <div className="flex h-[38px] items-center pb-[3px] pl-1">
      <DockButton icon="brush" label="图层样式" />
      <DockButton icon="addGroup" label="添加组" />
      <DockButton icon="eye" label="地图主题" mini />
      <DockButton icon="filter" label="过滤图例" mini />
      <DockButton icon="expr" label="按表达式过滤" off />
      <button type="button" aria-label="过滤菜单" className="flex h-6 w-4 items-center justify-center opacity-50"><Caret /></button>
      <DockButton icon="expand" label="全部展开" />
      <DockButton icon="collapse" label="全部折叠" />
      <DockButton icon="removeLayer" label="移除图层" />
    </div>
    <div className="flex-1 border border-[#b4b4b4] bg-white" />
  </section>
);

const ToolboxDock = () => (
  <section className="flex w-[385px] shrink-0 flex-col">
    <DockTitle>工具箱</DockTitle>
    <div className="flex h-[37px] items-center pb-[3px] pl-1">
      <DockButton icon="gears" label="模型" mini />
      <DockButton icon="scripts" label="脚本" mini />
      <DockButton icon="plainClock" label="历史" />
      <DockButton icon="doc" label="结果查看器" />
      <Separator />
      <DockButton icon="inplace" label="原地编辑" off />
      <Separator />
      <DockButton icon="wrench" label="选项" />
    </div>
    <label className="mr-px flex h-7 items-center gap-[9px] rounded-[3px] border border-[#a8a8a8] bg-white pl-[10px]">
      <SearchGlass />
      <input type="text" aria-label="搜索工具" placeholder="搜索. . ." className="min-w-0 flex-1 text-[15px] leading-5 outline-none placeholder:text-[#808080]" />
    </label>
    <ul className="flex-1 border-b border-l border-[#b4b4b4] bg-white">
      {toolboxItems.map((text) => (
        <li key={text} className="flex h-[22px] items-center pl-[10px] text-[15px] leading-5 even:h-[23px]">
          <Expander />
          <Icon name={toolboxIcon(text)} className="ml-[15px] size-[18px]" />
          <span className="ml-2">{text}</span>
        </li>
      ))}
    </ul>
  </section>
);

/* ---------- welcome page ---------- */

const Welcome = () => (
  <main className="flex min-w-0 flex-1 flex-col">
    <div className="flex min-h-0 flex-1">
      <section className="flex w-[473px] shrink-0 flex-col">
        <h1 className="mb-[7px] pl-[10px] text-xl leading-7 font-medium">最近工程</h1>
        <div className="flex-1 border-y border-r border-[#b4b4b4] bg-white" />
      </section>
      <div className="flex w-[6px] items-center justify-center"><SplitDots vertical /></div>
      <section className="flex min-w-0 flex-1 flex-col">
        <h1 className="mb-[2px] pl-[10px] text-xl leading-[38px] font-medium">工程模板</h1>
        <div className="flex-1 border-y border-r border-[#b4b4b4] bg-white p-[7px] pr-[9px]">
          <article className="flex rounded-xl bg-[#efefef] p-[7px] pb-1">
            <div className="h-[222px] w-[313px] shrink-0 rounded-lg bg-white p-5">
              <div className="h-full border border-dashed border-[#cfcfcf]" />
            </div>
            <div className="pt-[11px] pl-[26px]">
              <h2 className="text-[16px] leading-5 font-bold">新建空工程</h2>
              <p className="pt-[14px] font-['Liberation_Mono',monospace] text-xs leading-5">EPSG:4326 - WGS 84</p>
            </div>
          </article>
        </div>
      </section>
    </div>
    <div className="mt-2 flex h-8 shrink-0 border-2 border-[#93a58f] bg-[#dcefd8]">
      <p className="flex-1 self-center pl-1 font-['Liberation_Mono','Noto_Sans_CJK_SC',monospace] text-[13px] leading-5">
        <b>新版QGIS可用</b>: Visit{' '}
        <a href="https://download.qgis.org" className="text-[#2f8a10] underline">https://download.qgis.org</a> to get your copy of version 3.40.9
      </p>
      <div className="flex w-[17px] flex-col justify-end gap-px">
        <button type="button" aria-label="上一行" className="flex h-3 items-center justify-center border border-t-white border-r-[#6f7f6c] border-b-[#6f7f6c] border-l-white">
          <span className="size-px bg-[#506050]" />
        </button>
        <button type="button" aria-label="下一行" className="flex h-3 items-center justify-center border border-t-white border-r-[#6f7f6c] border-b-[#a9b8a5] border-l-white">
          <span className="size-px bg-[#506050]" />
        </button>
      </div>
    </div>
  </main>
);

/* ---------- status bar ---------- */

const Spin = ({ id, value }: { id: string; value: string }) => (
  <div className="flex h-[26px] w-[111px] rounded-[3px] border border-[#a8a8a8] bg-white">
    <input id={id} type="text" defaultValue={value} className="min-w-0 flex-1 pl-[5px] font-['Liberation_Mono',monospace] text-xs outline-none" />
    <div className="flex w-[18px] flex-col items-center justify-center gap-1 border-l border-[#a8a8a8] bg-linear-to-b from-white to-[#efefef]">
      <button type="button" aria-label="增加" className="flex"><Caret className="rotate-180" /></button>
      <button type="button" aria-label="减少" className="flex"><Caret /></button>
    </div>
  </div>
);

const StatusBar = () => (
  <footer className="flex h-[34px] shrink-0 items-center pr-[9px] pl-[5px] text-[14px]">
    <label className="flex h-[27px] w-[250px] items-center gap-[9px] rounded-[3px] border border-[#a8a8a8] bg-white pl-[10px]">
      <SearchGlass />
      <input
        type="text"
        aria-label="搜索"
        placeholder="搜索 (Ctrl+K)"
        className="min-w-0 flex-1 font-['Liberation_Mono','Noto_Sans_CJK_SC',monospace] text-[13px] leading-5 outline-none placeholder:text-[#808080]"
      />
    </label>
    <span className="ml-[10px] flex-1">就绪</span>
    <label htmlFor="coord">坐标</label>
    <input id="coord" type="text" className="ml-[3px] h-[27px] w-[25px] rounded-[3px] border border-[#a8a8a8] bg-white outline-none" />
    <button type="button" aria-label="范围" className="ml-[5px] flex size-[19px]">
      <svg viewBox="0 0 19 19" fill="none" stroke="#111" strokeWidth="1.6">
        <path d="M1 5l4-4 3 1 3 6-6 4zM5 1l5 8M2 4l5 8M1 9l4 5-3 2M8 2l3 2" strokeWidth="1.9" />
        <circle cx="12" cy="13" r="4.8" fill="#fff" />
        <circle cx="12.500" cy="14" r="1.500" fill="#111" />
        <path d="M14 3h1M17 1h1M17 5h1" />
      </svg>
    </button>
    <label htmlFor="scale" className="ml-4">比例</label>
    <div className="ml-[4px] grid h-[27px] w-[103px] items-center rounded-[3px] border border-[#a8a8a8] bg-white">
      <select id="scale" className="h-full w-full appearance-none pl-[3px] font-['Liberation_Mono',monospace] text-xs outline-none [grid-area:1/1]">
        <option>1:29854292</option>
      </select>
      <span className="pointer-events-none flex h-full w-[25px] items-center justify-center justify-self-end border-l border-[#b4b4b4] bg-linear-to-b from-white to-[#efefef] [grid-area:1/1]">
        <Caret />
      </span>
    </div>
    <button type="button" aria-label="锁定比例" className="ml-[15px] flex h-[19px] w-4">
      <svg viewBox="0 0 16 19">
        <path d="M3 9V6a5 5 0 0 1 10 0v3" fill="none" stroke="#8a8a8a" strokeWidth="2" />
        <rect y="8" width="16" height="11" rx="1" fill="#5e5e5e" />
      </svg>
    </button>
    <label htmlFor="magnifier" className="mr-[4px] ml-[10px]">放大镜</label>
    <Spin id="magnifier" value="100%" />
    <label htmlFor="rotation" className="mr-[10px] ml-[10px]">旋转角度</label>
    <Spin id="rotation" value="0.0°" />
    <label className="ml-[8px] flex items-center gap-[5px]">
      <span className="grid size-[18px]">
        <input type="checkbox" defaultChecked className="peer size-[18px] appearance-none border border-[#b0b0b0] bg-white [grid-area:1/1]" />
        <svg viewBox="0 0 18 18" className="pointer-events-none invisible [grid-area:1/1] peer-checked:visible" fill="none" stroke="#111" strokeWidth="2.6">
          <path d="M4.500 9l3 4.500 6-9.500" />
        </svg>
      </span>
      渲染
    </label>
    <button type="button" className="ml-[18px] flex items-center gap-[3px] font-['Liberation_Mono',monospace] text-xs">
      <svg viewBox="0 0 20 18" className="h-[18px] w-5" fill="#8f8f8f" stroke="#5a5a5a" aria-hidden="true">
        <path d="M5 1h10l4 6-2 6-5 4H8l-5-4L1 7z" />
        <path d="M1 7h18M3 12h14M5 1l2 16M15 1l-2 16M10 1v16M3 4h14" fill="none" stroke="#ddd" strokeWidth=".8" />
      </svg>
      EPSG:4326
    </button>
    <button type="button" aria-label="消息" className="ml-[34px] flex h-[18px] w-5">
      <svg viewBox="0 0 20 18" fill="#5e5e5e">
        <ellipse cx="10" cy="8" rx="10" ry="7.8" />
        <path d="M12 14l7 4-2-7z" />
        <circle cx="5.500" cy="8" r="1.400" fill="#fff" /><circle cx="10" cy="8" r="1.400" fill="#fff" /><circle cx="14.500" cy="8" r="1.400" fill="#fff" />
      </svg>
    </button>
  </footer>
);

export default function App() {
  return (
    <div className="flex h-screen flex-col overflow-hidden bg-[#efefef] font-['Open_Sans','Noto_Sans_CJK_SC',sans-serif] text-black">
      <header className="flex h-[29px] shrink-0 items-center bg-white pl-[2px] text-[#8a8a8a]">
        <Icon name="qgis" className="size-5" />
        <span className="flex-1 pl-[5px] text-[15px] leading-5">无标题工程 — QGIS</span>
        <div className="flex items-center gap-[46px] pr-[26px]">
          <button type="button" aria-label="最小化"><svg className="size-3" stroke="#8a8a8a"><path d="M0 5.500h12" /></svg></button>
          <button type="button" aria-label="还原">
            <svg className="size-3" fill="none" stroke="#8a8a8a"><path d="M.5 2.500h9v9h-9zM2.500 2.500v-2h9v9h-2" /></svg>
          </button>
          <button type="button" aria-label="关闭"><svg className="size-3" stroke="#777"><path d="M0 0l12 12M12 0L0 12" /></svg></button>
        </div>
      </header>

      <nav className="flex h-[26px] shrink-0 items-center gap-5 border-b-2 border-[#d6d6d6] pl-[13px] text-[15px] leading-5 text-[#989898]">
        {menus.map(([text, key]) => (
          <button key={text} type="button" className="whitespace-nowrap">
            {text}
            {key && <>(<u className="underline-offset-2">{key}</u>)</>}
          </button>
        ))}
      </nav>

      <div className="flex h-12 shrink-0 border-b border-[#b4b4b4] bg-linear-to-b from-[#fbfbfb] to-[#eeeeee]">
        <Handle first />
        <Group tools={fileTools} />
        <Handle />
        <Group tools={navTools} />
        <Handle />
        <Group tools={selectTools} />
        <Handle />
        <Group tools={attrTools} />
      </div>

      <div className="flex h-[49px] shrink-0 border-b border-[#b4b4b4] bg-linear-to-b from-[#fbfbfb] to-[#eeeeee]">
        <Handle first />
        <Group tools={sourceTools} />
        <Handle />
        <Group tools={editTools} />
        <Handle />
        <Group tools={labelTools} />
        <Separator />
        <Group tools={pinTools} />
        <Separator />
        <Group tools={moveTools} />
        <Handle />
        <Group tools={[{ icon: 'metasearch', label: '元搜索' }]} />
        <Handle />
        <Group tools={[{ icon: 'python', label: 'Python控制台' }]} />
        <Handle />
        <Group tools={[{ icon: 'help', label: '帮助内容' }]} />
        <Handle />
      </div>

      <div className="flex h-12 shrink-0 border-b-2 border-[#b4b4b4] bg-linear-to-b from-[#fbfbfb] to-[#eeeeee] pt-[2px]">
        <Handle first />
        <Group tools={gpsTools} />
        <Separator />
        <Group tools={trackTools} />
        <Separator />
        <Group tools={infoTools} />
        <Handle />
        <div className="relative flex pl-px">
          <Group tools={pluginTools} />
          <div className="pointer-events-none absolute -top-[2px] -right-2 -bottom-[2px] -left-1 border-4 border-[#ed1c24]" />
        </div>
      </div>

      <div className="flex min-h-0 flex-1">
        <aside className="flex w-[331px] shrink-0 flex-col">
          <BrowserDock />
          <div className="flex h-[6px] shrink-0 items-center justify-center"><SplitDots /></div>
          <LayersDock />
        </aside>
        <div className="flex w-2 items-center justify-center"><SplitDots vertical /></div>
        <Welcome />
        <div className="flex w-[7px] items-center justify-center"><SplitDots vertical /></div>
        <ToolboxDock />
      </div>

      <StatusBar />
    </div>
  );
}
